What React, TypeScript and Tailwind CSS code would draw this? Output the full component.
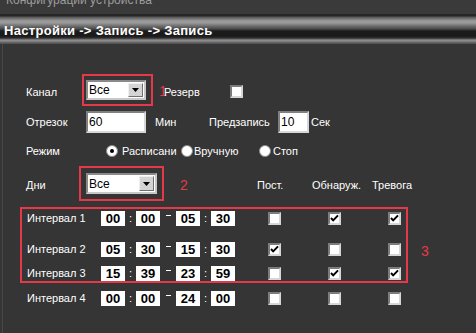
import React from 'react'

const RED = 'border-[#e5394a]'

function Checkbox({ checked = false }: { checked?: boolean }) {
  return (
    <span className="flex h-[13px] w-[13px] shrink-0 items-center justify-center border-2 border-[#7c7c7c] border-b-[#d6d6d6] border-r-[#d6d6d6] bg-white">
      {checked && (
        <svg width="9" height="8" viewBox="0 0 9 8">
          <polyline points="1,4 3.2,6.4 8,1.4" fill="none" stroke="#000" strokeWidth="2" />
        </svg>
      )}
    </span>
  )
}

function Radio({ checked = false }: { checked?: boolean }) {
  return (
    <span className="flex h-[12px] w-[12px] shrink-0 items-center justify-center rounded-full border border-[#8a8a8a] bg-white">
      {checked && <span className="h-[4px] w-[4px] rounded-full bg-black" />}
    </span>
  )
}

function Select({ width, height, value }: { width: string; height: string; value: string }) {
  return (
    <div className={`flex ${width} ${height} items-stretch border-2 border-[#8a8a8a] border-b-[#c8c8c8] border-r-[#c8c8c8] bg-white`}>
      <span className="flex flex-1 items-center pl-[1px] text-[12px] text-black">{value}</span>
      <span className="m-[1px] flex w-[15px] items-center justify-center border border-[#f0f0f0] border-b-[#707070] border-r-[#707070] bg-[#d4d4d4]">
        <svg width="7" height="4" viewBox="0 0 7 4">
          <polygon points="0,0 7,0 3.5,4" fill="#000" />
        </svg>
      </span>
    </div>
  )
}

function Field({ width, value }: { width: string; value: string }) {
  return (
    <span className={`flex ${width} h-[22px] items-center border-2 border-[#808080] border-b-[#d8d8d8] border-r-[#d8d8d8] bg-white pl-[1px] text-[12px] text-black`}>
      {value}
    </span>
  )
}

function TimeBox({ value }: { value: string }) {
  return (
    <span className="flex h-[15px] w-[24px] items-center justify-center bg-white text-[13px] font-bold leading-none text-black">
      {value}
    </span>
  )
}

type Interval = { label: string; times: string[]; checks: boolean[] }

function IntervalRow({ row }: { row: Interval }) {
  return (
    <div className="flex h-[16px] items-center">
      <span className="w-[74px] text-[11px]">{row.label}</span>
      <TimeBox value={row.times[0]} />
      <span className="w-[11px] text-center text-[11px] leading-none">:</span>
      <TimeBox value={row.times[1]} />
      <span className="flex w-[16px] justify-center">
        <span className="-mt-[3px] h-[1px] w-[5px] bg-white" />
      </span>
      <TimeBox value={row.times[2]} />
      <span className="w-[11px] text-center text-[11px] leading-none">:</span>
      <TimeBox value={row.times[3]} />
      <span className="ml-[33px]">
        <Checkbox checked={row.checks[0]} />
      </span>
      <span className="ml-[47px]">
        <Checkbox checked={row.checks[1]} />
      </span>
      <span className="ml-[47px]">
        <Checkbox checked={row.checks[2]} />
      </span>
    </div>
  )
}

const intervals: Interval[] = [
  { label: 'Интервал 1', times: ['00', '00', '05', '30'], checks: [false, true, true] },
  { label: 'Интервал 2', times: ['05', '30', '15', '30'], checks: [true, false, false] },
  { label: 'Интервал 3', times: ['15', '39', '23', '59'], checks: [false, true, true] },
  { label: 'Интервал 4', times: ['00', '00', '24', '00'], checks: [false, false, false] },
]

export default function App() {
  return (
    <div className="flex h-[333px] w-[476px] flex-col overflow-hidden bg-[#353535] font-['Liberation_Sans',Arial,sans-serif] text-white">
      {/* window title, cut off by the top edge */}
      <div className="h-[14px] shrink-0 overflow-hidden bg-[#3a3a3a] pl-[6px]">
        <div className="-mt-[7px] text-[12px] leading-[14px] text-[#9c9c9c]">Конфигурации устройства</div>
      </div>

      <div className="flex h-[30px] shrink-0 items-center bg-[linear-gradient(to_bottom,#262626_0px,#262626_2px,#555555_3px,#7a7a7a_5px,#9c9c9c_7px,#989898_9px,#6e6e6e_12px,#484848_15px,#1c1c1c_17px,#1a1a1a_22px,#2e2e2e_24px,#8a8a8a_26px,#8a8a8a_27px,#555555_29px)] pl-[4px] pt-[3px]">
        <span className="text-[13px] font-bold tracking-[0.3px] text-white">Настройки -&gt; Запись -&gt; Запись</span>
      </div>

      <div className="ml-[2px] flex flex-1 flex-col border-l border-[#474747]">
        {/* Канал */}
        <div className="mt-[30px] flex h-[32px] items-center pl-[23px]">
          <span className="w-[56px] pt-[5px] text-[11px]">Канал</span>
          <div className={`flex h-[32px] w-[71px] items-center border-2 ${RED} pl-[2px]`}>
            <Select width="w-[60px]" height="h-[20px]" value="Все" />
          </div>
          <span className="ml-[6px] w-[5px] overflow-visible pt-[2px] text-[14px] leading-none text-[#e5394a]">1</span>
          <span className="pt-[5px] text-[11px]">Резерв</span>
          <span className="ml-[30px] pt-[2px]">
            <Checkbox />
          </span>
        </div>

        {/* Отрезок / Предзапись */}
        <div className="mt-[5px] flex h-[22px] items-center pl-[23px]">
          <span className="w-[60px] pt-[1px] text-[11px]">Отрезок</span>
          <Field width="w-[60px]" value="60" />
          <span className="ml-[9px] w-[54px] pt-[1px] text-[11px]">Мин</span>
          <span className="w-[69px] pt-[1px] text-[11px]">Предзапись</span>
          <Field width="w-[31px]" value="10" />
          <span className="ml-[2px] pt-[1px] text-[11px]">Сек</span>
        </div>

        {/* Режим */}
        <div className="mt-[10px] flex h-[16px] items-center pl-[23px]">
          <span className="w-[80px] text-[11px]">Режим</span>
          <Radio checked />
          <span className="ml-[4px] w-[59px] text-[11px]">Расписани</span>
          <Radio />
          <span className="ml-[1px] w-[65px] text-[11px]">Вручную</span>
          <Radio />
          <span className="ml-[2px] text-[11px]">Стоп</span>
        </div>

        {/* Дни + column headers */}
        <div className="mt-[7px] flex h-[35px] items-center pl-[23px]">
          <span className="w-[53px] pt-[3px] text-[11px]">Дни</span>
          <div className={`flex h-[35px] w-[85px] items-center justify-center border-2 ${RED}`}>
            <Select width="w-[71px]" height="h-[21px]" value="Все" />
          </div>
          <span className="ml-[16px] w-[77px] pt-[3px] text-[14px] leading-none text-[#e5394a]">2</span>
          <span className="w-[55px] pt-[4px] text-[11px]">Пост.</span>
          <span className="w-[60px] pt-[4px] text-[11px]">Обнаруж.</span>
          <span className="pt-[4px] text-[11px]">Тревога</span>
        </div>

        {/* intervals 1-3 framed */}
        <div className="mt-[6px] flex items-center">
          <div className={`ml-[17px] flex w-[388px] flex-col border-2 ${RED} pl-[5px] pt-[1px]`}>
            <IntervalRow row={intervals[0]} />
            <div className="mt-[15px]">
              <IntervalRow row={intervals[1]} />
            </div>
            <div className="mt-[8px]">
              <IntervalRow row={intervals[2]} />
            </div>
          </div>
          <span className="ml-[13px] mt-[12px] text-[14px] text-[#e5394a]">3</span>
        </div>

        <div className="mt-[7px] pl-[24px]">
          <IntervalRow row={intervals[3]} />
        </div>
      </div>
    </div>
  )
}
